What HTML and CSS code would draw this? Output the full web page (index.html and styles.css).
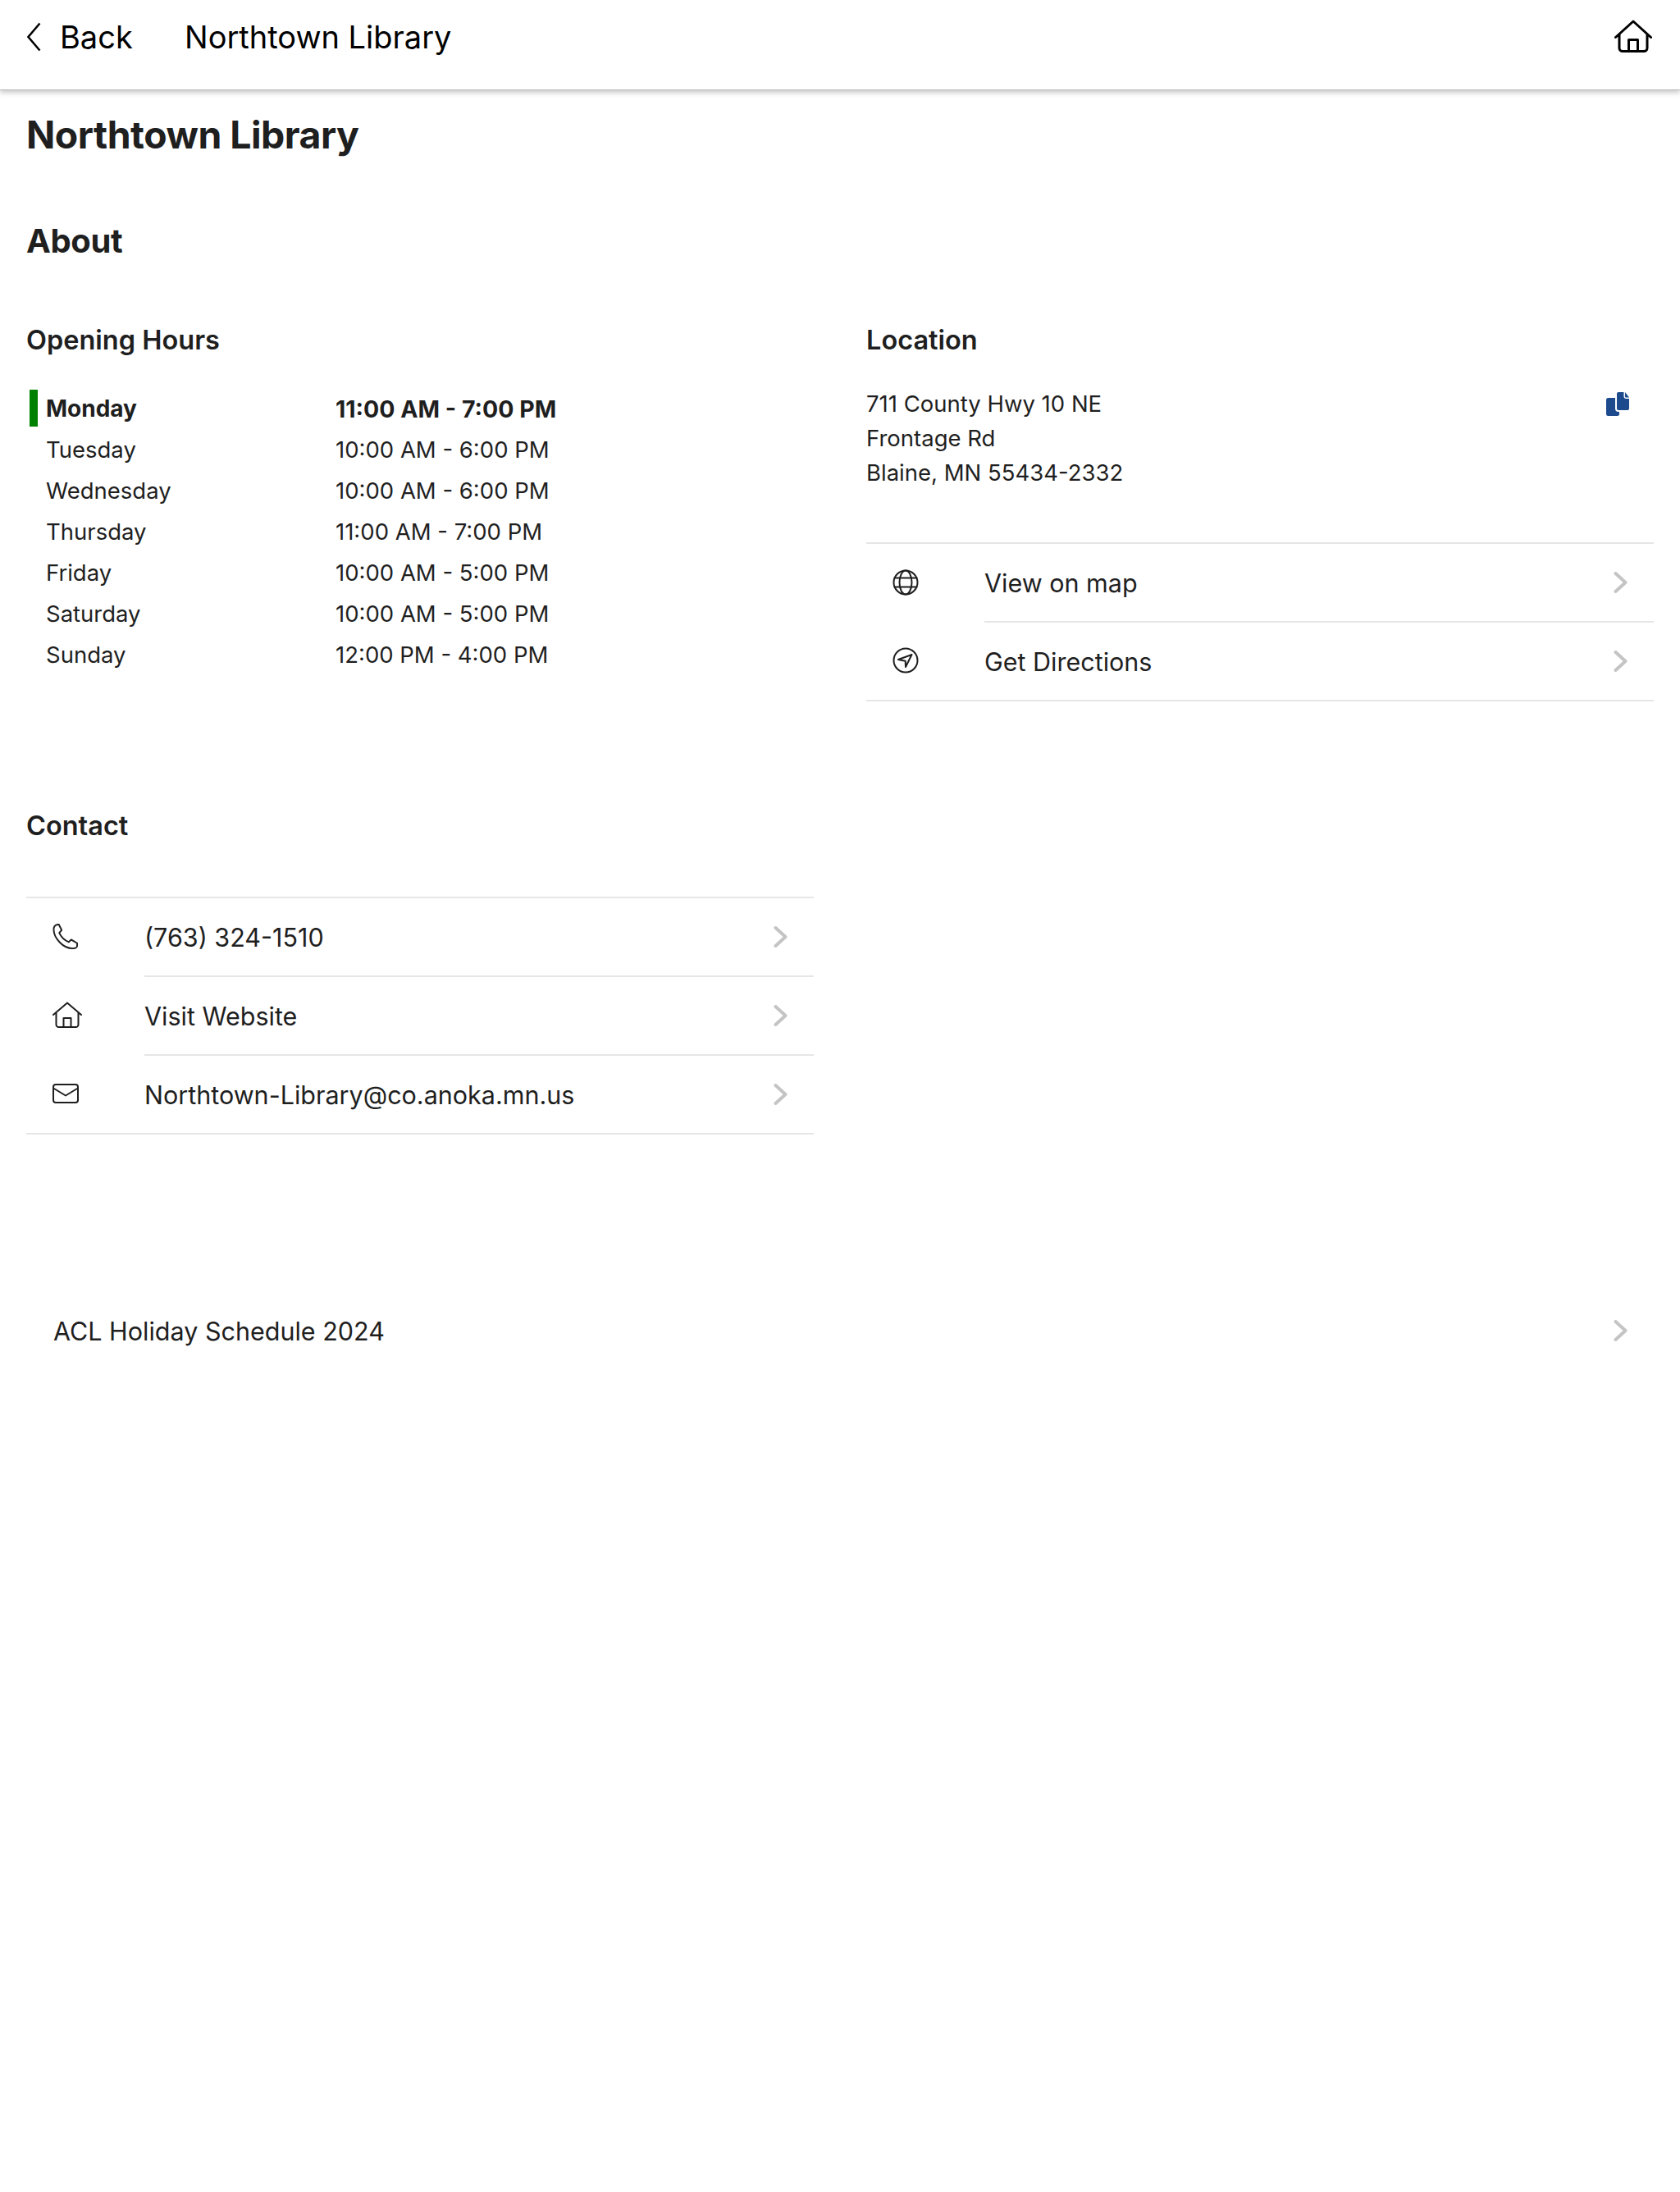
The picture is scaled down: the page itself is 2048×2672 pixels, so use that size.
FILE: index.html
```html
<!DOCTYPE html>
<html lang="en">
<head>
<meta charset="utf-8">
<title>Northtown Library</title>
<link rel="stylesheet" href="styles.css">
</head>
<body>
<header class="topbar">
  <div class="back">
    <svg class="back-icon" viewBox="0 0 17 36"><path d="M15.5 1.5 1.5 18l14 16.500"/></svg>
    <span class="back-label">Back</span>
  </div>
  <div class="topbar-title">Northtown Library</div>
  <svg class="topbar-home" viewBox="0 0 46 40"><path d="M1.500 21.500 23 2l21.500 19.500M6 18v16.500a4 4 0 0 0 4 4h26a4 4 0 0 0 4-4V18M17.500 38.500V24.500h11v14"/></svg>
</header>
<main class="page">
  <h1 class="title">Northtown Library</h1>
  <h2 class="about">About</h2>
  <div class="columns">
    <section class="hours">
      <h3 class="heading">Opening Hours</h3>
      <ul class="hours-list">
        <li class="hours-row today"><span class="day">Monday</span><span>11:00 AM - 7:00 PM</span></li>
        <li class="hours-row"><span class="day">Tuesday</span><span>10:00 AM - 6:00 PM</span></li>
        <li class="hours-row"><span class="day">Wednesday</span><span>10:00 AM - 6:00 PM</span></li>
        <li class="hours-row"><span class="day">Thursday</span><span>11:00 AM - 7:00 PM</span></li>
        <li class="hours-row"><span class="day">Friday</span><span>10:00 AM - 5:00 PM</span></li>
        <li class="hours-row"><span class="day">Saturday</span><span>10:00 AM - 5:00 PM</span></li>
        <li class="hours-row"><span class="day">Sunday</span><span>12:00 PM - 4:00 PM</span></li>
      </ul>
    </section>
    <section class="location">
      <h3 class="heading">Location</h3>
      <div class="address">
        <div>711 County Hwy 10 NE<br>Frontage Rd<br>Blaine, MN 55434-2332</div>
        <svg class="copy" viewBox="0 0 28 29"><path d="M2.500 7H11v13a4 4 0 0 0 4 4h1v2.500a2.500 2.500 0 0 1-2.500 2.500h-11A2.500 2.500 0 0 1 0 26.500v-17A2.500 2.500 0 0 1 2.500 7z"/><path d="M15 0h6.500v5a3 3 0 0 0 3 3H28v12a2 2 0 0 1-2 2H15a2 2 0 0 1-2-2V2a2 2 0 0 1 2-2z"/><path d="M23 0l5 6.500h-4a1 1 0 0 1-1-1z"/></svg>
      </div>
      <ul class="list">
        <li class="row">
          <span class="row-icon"><svg class="ic" viewBox="0 0 32 32"><circle cx="16" cy="16" r="14.500"/><ellipse cx="16" cy="16" rx="7.500" ry="14.500"/><path d="M2.500 10.500h27M2.500 21.500h27"/></svg></span>
          <span class="row-body"><span>View on map</span><svg class="chev" viewBox="0 0 17 26"><path d="M2.500 2 14.500 13l-12 11"/></svg></span>
        </li>
        <li class="row">
          <span class="row-icon"><svg class="ic" viewBox="0 0 32 32"><circle cx="16" cy="16" r="14.500"/><path d="M23.500 9 7 15l8.700 1.700L16 24z"/></svg></span>
          <span class="row-body"><span>Get Directions</span><svg class="chev" viewBox="0 0 17 26"><path d="M2.500 2 14.500 13l-12 11"/></svg></span>
        </li>
      </ul>
    </section>
    <section class="contact">
      <h3 class="heading">Contact</h3>
      <ul class="list">
        <li class="row">
          <span class="row-icon"><svg class="ic" viewBox="0 0 32 33"><path d="M1 7c0-3 2-5.500 5-6l1.500 0 3.500 7-3 3.500c2 4.500 7 9.500 12 11.500l3-3 7.500 4.500v3c0 2-2 3.500-4.500 3.500C13 32 1 18 1 7z"/></svg></span>
          <span class="row-body"><span>(763) 324-1510</span><svg class="chev" viewBox="0 0 17 26"><path d="M2.500 2 14.500 13l-12 11"/></svg></span>
        </li>
        <li class="row">
          <span class="row-icon"><svg class="ic ic-home" viewBox="0 0 36 32"><path d="M1 16 18 1.500 35 16M4.500 13v15a3 3 0 0 0 3 3h21a3 3 0 0 0 3-3V13M13.500 31V20h9v11"/></svg></span>
          <span class="row-body"><span>Visit Website</span><svg class="chev" viewBox="0 0 17 26"><path d="M2.500 2 14.500 13l-12 11"/></svg></span>
        </li>
        <li class="row">
          <span class="row-icon"><svg class="ic ic-mail" viewBox="0 0 32 24"><rect x="1" y="1" width="30" height="22" rx="3"/><path d="m2 6 14 8.500L30 6"/></svg></span>
          <span class="row-body"><span>Northtown-Library@co.anoka.mn.us</span><svg class="chev" viewBox="0 0 17 26"><path d="M2.500 2 14.500 13l-12 11"/></svg></span>
        </li>
      </ul>
    </section>
  </div>
  <div class="schedule">
    <span>ACL Holiday Schedule 2024</span>
    <svg class="chev" viewBox="0 0 17 26"><path d="M2.500 2 14.500 13l-12 11"/></svg>
  </div>
</main>
</body>
</html>
```

FILE: styles.css
```css
* { box-sizing: border-box; }
html, body { margin: 0; padding: 0; background: #fff; }
body {
  min-height: 2672px;
  font-family: Inter, "Liberation Sans", sans-serif;
  color: #1f1f1f;
}
ul { list-style: none; margin: 0; padding: 0; }
h1, h2, h3 { margin: 0; }

.topbar {
  height: 110px;
  display: flex;
  align-items: center;
  padding: 0 34px 20px 33px;
  background: #fff;
  border-bottom: 1px solid #bdbdbd;
  box-shadow: 0 3px 6px rgba(0, 0, 0, 0.22);
  color: #000;
  font-size: 38px;
}
.back { display: flex; align-items: center; gap: 23px; width: 192px; }
.back-icon { width: 17px; height: 36px; fill: none; stroke: #000; stroke-width: 2.500; }
.topbar-title { flex: 1; }
.topbar-home { width: 46px; height: 40px; margin-bottom: 2px; fill: none; stroke: #000; stroke-width: 3; stroke-linecap: round; stroke-linejoin: round; }

.page { padding: 0 32px; }
.title { font-size: 46.400px; font-weight: 700; line-height: 58px; padding-top: 25px; letter-spacing: -0.5px; }
.about { font-size: 40px; font-weight: 700; line-height: 48px; margin-top: 77px; letter-spacing: -0.4px; }
.columns {
  display: grid;
  grid-template-columns: 960px 960px;
  column-gap: 64px;
  margin-top: 77px;
}
.heading { font-size: 32.500px; font-weight: 600; line-height: 40px; }

.hours-list { margin-top: 38px; }
.hours-row {
  display: flex;
  height: 50px;
  align-items: center;
  font-size: 27.500px;
  padding-left: 24px;
  position: relative;
}
.day { width: 353px; }
.today { font-weight: 700; font-size: 28.500px; }
.today .day { font-size: 28px; }
.today::before {
  content: "";
  position: absolute;
  left: 4px;
  top: 2px;
  bottom: 3px;
  width: 10px;
  background: #008000;
}

.address {
  display: flex;
  justify-content: space-between;
  align-items: flex-start;
  margin-top: 36px;
  font-size: 27.500px;
  line-height: 42px;
  padding-right: 30px;
}
.copy { width: 28px; height: 29px; margin-top: 7px; fill: #1d4a8c; }

.location .list { margin-top: 64px; }
.contact { grid-column: 1; margin-top: 132px; }
.contact .list { margin-top: 66px; }
.list { border-top: 2px solid #e6e6e6; border-bottom: 2px solid #e6e6e6; }
.row { display: flex; height: 94px; }
.row + .row { height: 96px; }
.row-icon { width: 144px; padding-left: 32px; display: flex; align-items: center; }
.row-body {
  flex: 1;
  display: flex;
  align-items: center;
  justify-content: space-between;
  padding-right: 32px;
  font-size: 30.500px;
}
.row + .row .row-body { border-top: 2px solid #e6e6e6; }
.ic {
  width: 32px;
  height: 32px;
  fill: none;
  stroke: #1f1f1f;
  stroke-width: 2;
  stroke-linejoin: round;
  stroke-linecap: round;
}
.ic-home { width: 36px; }
.ic-mail { height: 24px; }
.chev { width: 17px; height: 26px; fill: none; stroke: #c4c4c4; stroke-width: 4; stroke-linecap: round; stroke-linejoin: round; }

.schedule {
  display: flex;
  align-items: center;
  justify-content: space-between;
  margin-top: 191px;
  height: 96px;
  padding: 0 32px 0 33px;
  font-size: 30.500px;
}
```
